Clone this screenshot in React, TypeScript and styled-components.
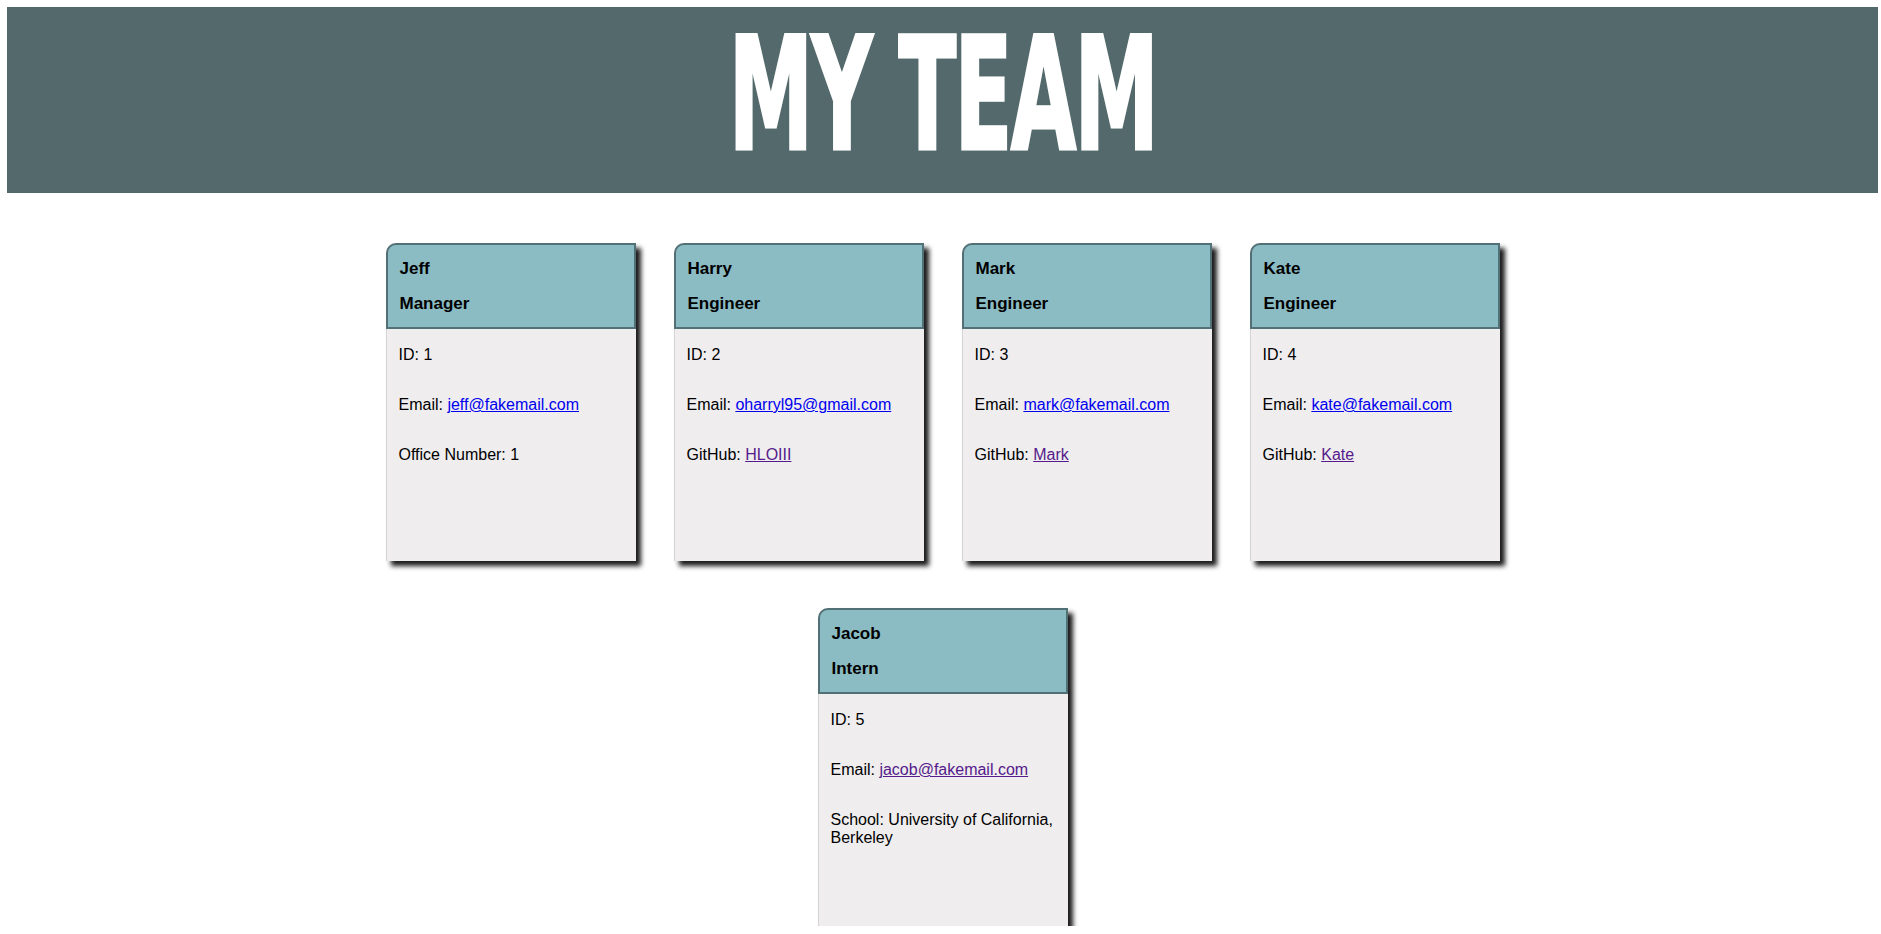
import React from "react";
import styled, { createGlobalStyle } from "styled-components";

const GlobalStyle = createGlobalStyle`
  html, body {
    margin: 0;
    padding: 0;
    background: #ffffff;
    font-family: "Liberation Sans", Arial, sans-serif;
    color: #000000;
  }
`;

const Page = styled.div`
  padding: 7px 3px 0 7px;
`;

const Banner = styled.header`
  height: 186px;
  box-sizing: border-box;
  background: #53696b;
  display: flex;
  justify-content: center;
  padding-top: 9px;
`;

const Title = styled.h1`
  margin: 0;
  font-family: "Liberation Sans Narrow", "DejaVu Sans Condensed", sans-serif;
  font-weight: 700;
  font-size: 157px;
  line-height: 157px;
  letter-spacing: -3px;
  color: #ffffff;
  white-space: nowrap;
  transform: scaleX(0.6);
  transform-origin: center top;
  -webkit-text-stroke: 3px #ffffff;
`;

const Grid = styled.main`
  width: 1114px;
  margin: 50px auto 0;
  display: flex;
  flex-wrap: wrap;
  justify-content: center;
  column-gap: 38px;
  row-gap: 47px;
`;

const Card = styled.section`
  width: 250px;
  height: 318px;
  display: flex;
  flex-direction: column;
  background: #efedee;
  border-top-left-radius: 10px;
  box-shadow: 5px 5px 5px rgba(0, 0, 0, 0.9);
`;

const CardHead = styled.div`
  height: 86px;
  box-sizing: border-box;
  background: #8bbcc3;
  border: 2px solid #527176;
  border-top-left-radius: 10px;
  padding: 14px 12px 0 12px;
  display: flex;
  flex-direction: column;
  gap: 15px;
`;

const HeadLine = styled.div`
  font-weight: 700;
  font-size: 17px;
  line-height: 20px;
`;

const CardBody = styled.div`
  flex: 1;
  border-left: 1px solid #d4d4d4;
  padding: 17px 10px 0 12px;
  display: flex;
  flex-direction: column;
  gap: 32px;
`;

const Info = styled.p`
  margin: 0;
  font-size: 16px;
  line-height: 18px;
`;

const Link = styled.a<{ $visited?: boolean }>`
  color: ${(p) => (p.$visited ? "#551a8b" : "#0000ee")};
  text-decoration: underline;
`;

type Member = {
  name: string;
  role: string;
  id: number;
  email: string;
  emailVisited?: boolean;
  extraLabel: string;
  extraValue: string;
  extraLink?: boolean;
};

const team: Member[] = [
  { name: "Jeff", role: "Manager", id: 1, email: "jeff@fakemail.com", extraLabel: "Office Number", extraValue: "1" },
  { name: "Harry", role: "Engineer", id: 2, email: "oharryl95@gmail.com", extraLabel: "GitHub", extraValue: "HLOIII", extraLink: true },
  { name: "Mark", role: "Engineer", id: 3, email: "mark@fakemail.com", extraLabel: "GitHub", extraValue: "Mark", extraLink: true },
  { name: "Kate", role: "Engineer", id: 4, email: "kate@fakemail.com", extraLabel: "GitHub", extraValue: "Kate", extraLink: true },
  { name: "Jacob", role: "Intern", id: 5, email: "jacob@fakemail.com", emailVisited: true, extraLabel: "School", extraValue: "University of California, Berkeley" },
];

export default function App() {
  return (
    <>
      <GlobalStyle />
      <Page>
        <Banner>
          <Title>MY TEAM</Title>
        </Banner>
        <Grid>
          {team.map((m) => (
            <Card key={m.id}>
              <CardHead>
                <HeadLine>{m.name}</HeadLine>
                <HeadLine>{m.role}</HeadLine>
              </CardHead>
              <CardBody>
                <Info>ID: {m.id}</Info>
                <Info>
                  Email: <Link href={`mailto:${m.email}`} $visited={m.emailVisited}>{m.email}</Link>
                </Info>
                <Info>
                  {m.extraLabel}:{" "}
                  {m.extraLink ? (
                    <Link href={`https://github.com/${m.extraValue}`} $visited>
                      {m.extraValue}
                    </Link>
                  ) : (
                    m.extraValue
                  )}
                </Info>
              </CardBody>
            </Card>
          ))}
        </Grid>
      </Page>
    </>
  );
}
